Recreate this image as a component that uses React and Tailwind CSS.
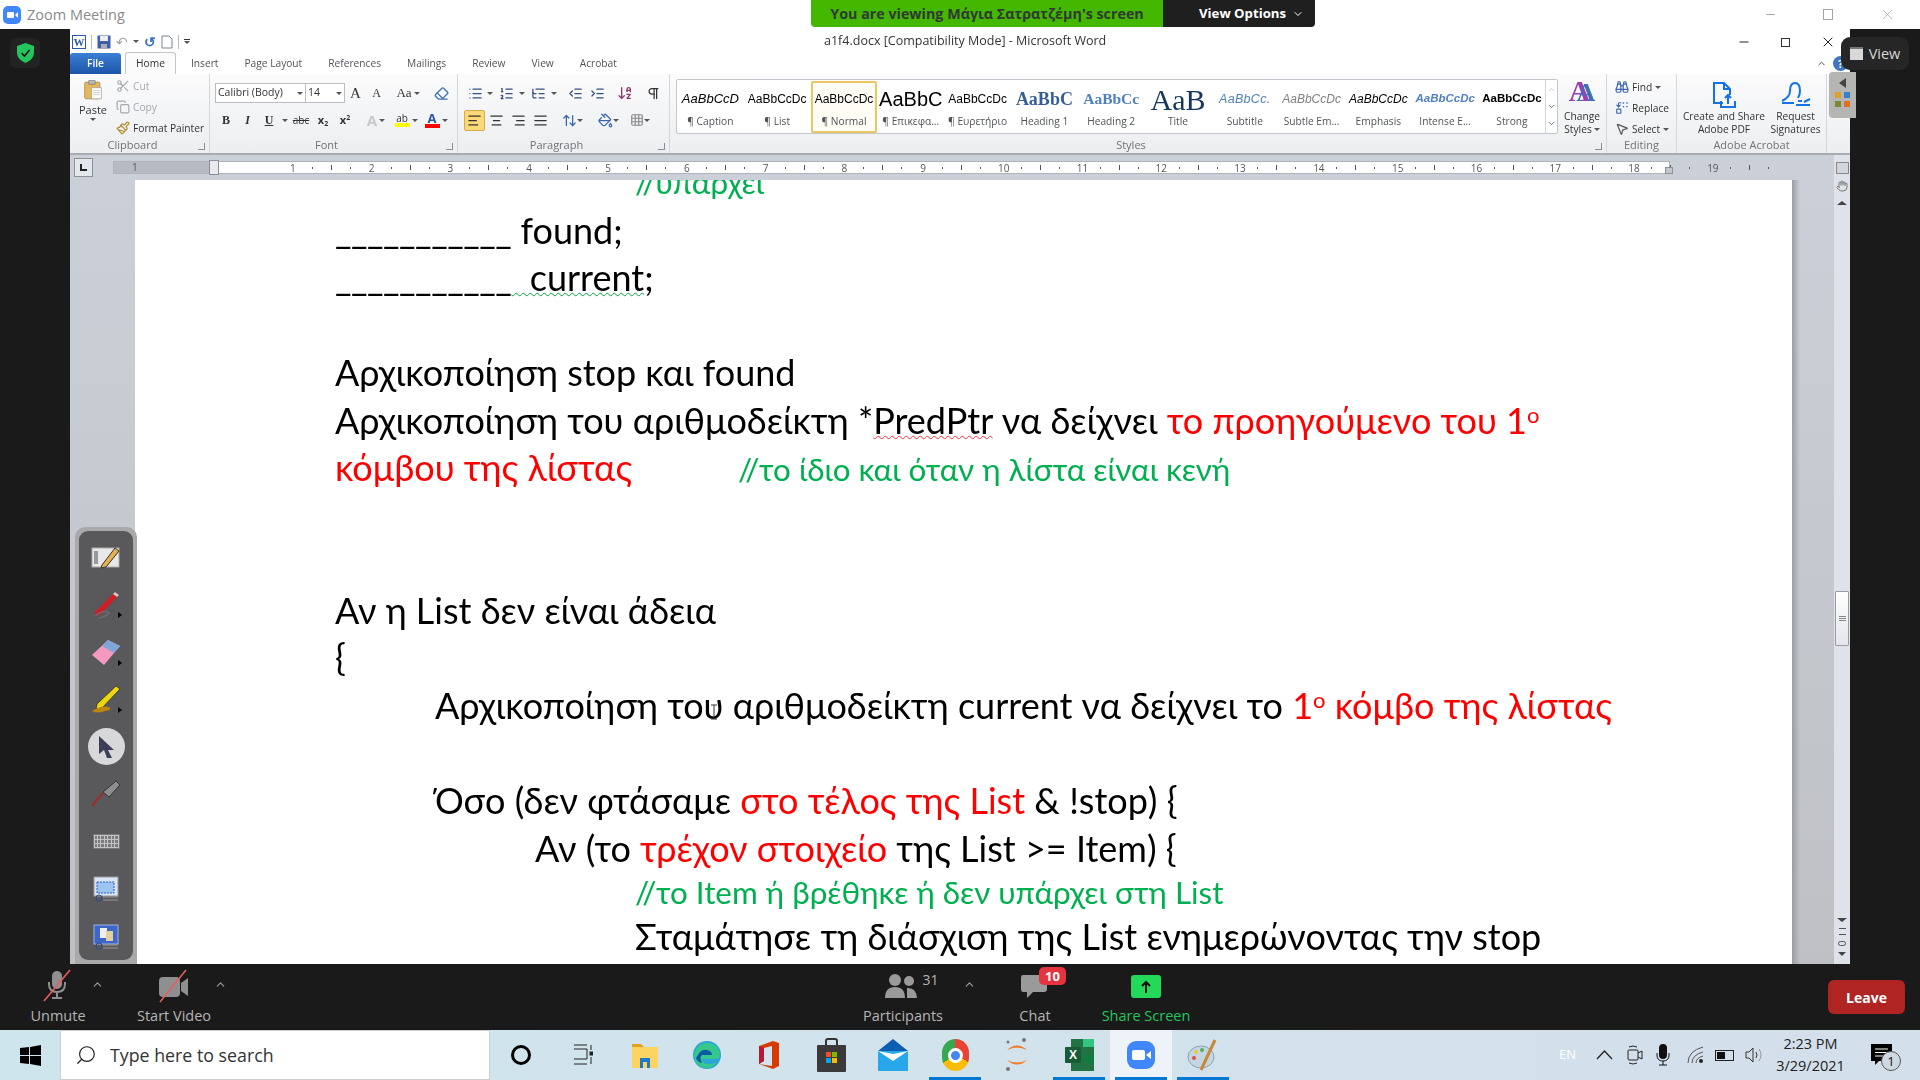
import React from 'react';
import {
  AlignCenter, AlignJustify, AlignLeft, AlignRight, ArrowDownAZ, ChevronDown, ChevronUp, Copy, Eraser,
  Hand, IndentDecrease, IndentIncrease, List, ListOrdered, ListTree, Minus, PaintBucket, Paintbrush, Pilcrow,
  Scissors, Search, Grid3x3, X, ArrowUpDown, MousePointer2, Replace, Binoculars,
} from 'lucide-react';

const styles = [
  { text: 'AaBbCcD', label: '¶ Caption', cls: 'italic text-[13px] text-black' },
  { text: 'AaBbCcDc', label: '¶ List', cls: 'text-[12px] text-black' },
  { text: 'AaBbCcDc', label: '¶ Normal', cls: 'text-[12px] text-black', active: true },
  { text: 'AaBbC', label: '¶ Επικεφα...', cls: 'text-[20px] text-black' },
  { text: 'AaBbCcDc', label: '¶ Ευρετήριο', cls: 'text-[12px] text-black' },
  { text: 'AaBbC', label: 'Heading 1', cls: "font-['Liberation_Serif',serif] font-bold text-[18px] text-[#365f91]" },
  { text: 'AaBbCc', label: 'Heading 2', cls: "font-['Liberation_Serif',serif] font-bold text-[15.5px] text-[#4f81bd]" },
  { text: 'AaB', label: 'Title', cls: "font-['Liberation_Serif',serif] text-[30px] text-[#17365d]" },
  { text: 'AaBbCc.', label: 'Subtitle', cls: 'italic text-[12.5px] tracking-wide text-[#4f81bd]' },
  { text: 'AaBbCcDc', label: 'Subtle Em...', cls: 'italic text-[12px] text-[#808080]' },
  { text: 'AaBbCcDc', label: 'Emphasis', cls: 'italic text-[12px] text-black' },
  { text: 'AaBbCcDc', label: 'Intense E...', cls: 'italic font-semibold text-[11.5px] text-[#4f81bd]' },
  { text: 'AaBbCcDc', label: 'Strong', cls: 'font-bold text-[11.5px] text-black' },
];

const rulerNumbers = [1, 2, 3, 4, 5, 6, 7, 8, 9, 10, 11, 12, 13, 14, 15, 16, 17, 18, 19];

function Caret() {
  return <span className="w-0 h-0 border-x-[3px] border-x-transparent border-t-[3px] border-t-[#555] shrink-0" />;
}

function Group({ width, label, children, launcher = true }) {
  return (
    <div className={`relative flex flex-col h-full border-r border-[#d3d6da] ${width}`}>
      <div className="h-[63px] shrink-0">{children}</div>
      <div className={`flex-1 text-center text-[11px] leading-[15px] text-[#6f7378] ${launcher ? 'pr-[14px]' : ''}`}>{label}</div>
      {launcher && <span className="absolute right-[4px] bottom-[3px] w-[7px] h-[7px] border-r border-b border-[#8a8d92]" />}
    </div>
  );
}

function Slot({ w, children, cls = '' }) {
  return <div className={`flex items-center justify-center shrink-0 ${w} ${cls}`}>{children}</div>;
}

function StyleCell({ item }) {
  return (
    <div className={`w-[66.8px] h-[52px] shrink-0 flex flex-col items-center ${item.active ? 'border-2 border-[#e9c765] rounded-[2px] bg-[#fffdf5]' : 'border-2 border-transparent'}`}>
      <div className={`h-[31px] pt-[2px] flex items-center whitespace-nowrap font-['Liberation_Sans',sans-serif] ${item.cls}`}>{item.text}</div>
      <div className="text-[10.2px] leading-[14px] whitespace-nowrap text-[#50545a]">{item.label}</div>
    </div>
  );
}

function RulerCell({ n }) {
  return (
    <div className="w-[78.8px] shrink-0 flex items-center text-[#555] text-[10px] leading-none">
      <span className="w-[8px] -ml-[4px] text-center">{n}</span>
      <span className="ml-[15px] w-px h-[2px] bg-[#555]" />
      <span className="ml-[18px] w-px h-[5px] bg-[#555]" />
      <span className="ml-[18px] w-px h-[2px] bg-[#555]" />
    </div>
  );
}

function DocLine({ indent = '', green, short, children }) {
  const height = short ? 'h-[41px] leading-[41px]' : 'h-[47.55px] leading-[47.55px]';
  return (
    <div className={`whitespace-nowrap ${height} ${indent} ${green ? 'text-[31.4px] text-[#00b050]' : 'text-[36px] text-black'}`}>
      {children}
    </div>
  );
}

function Red({ children }) {
  return <span className="text-[#ff0000]">{children}</span>;
}

function ControlLabel({ children, cls = 'text-[#b5b5b5]' }) {
  return <div className={`mt-[4px] text-[14.5px] leading-[18px] whitespace-nowrap ${cls}`}>{children}</div>;
}

function TaskIcon({ children, cls = '', active }) {
  return (
    <div className={`relative w-[62px] h-full shrink-0 flex items-center justify-center ${cls}`}>
      {children}
      {active && <span className="absolute bottom-0 left-[5px] right-[5px] h-[3px] bg-[#0078d4]" />}
    </div>
  );
}

function ToolSlot({ children }) {
  return <div className="h-[47.5px] shrink-0 flex items-center justify-center">{children}</div>;
}

function AnnotateTools() {
  return (
    <div className="absolute left-[75px] top-[527px] w-[62px] h-[437px] rounded-t-[10px] bg-[#a9a9ab] p-[4px] z-10">
      <div className="relative h-full rounded-[9px] bg-[#59585b] flex flex-col items-center pt-[2px]">
        <ToolSlot><svg width="30" height="24" viewBox="0 0 30 24"><rect x="1" y="3" width="27" height="19" fill="#e8e8e8" stroke="#aaa" /><rect x="3" y="6" width="4" height="13" fill="#999" /><path d="M11 20 L24 3 L28 6 L15 22 L10 23 Z" fill="#e3b24c" stroke="#333" /></svg></ToolSlot>
        <ToolSlot><svg width="30" height="30" viewBox="0 0 30 30"><path d="M3 24 L24 3 L28 6 L8 27 Z" fill="#cf1f26" /><path d="M24 3 L28 6 L26 8 L22 5 Z" fill="#ccc" /><path d="M4 27 Q14 20 18 24 Q14 28 8 29" stroke="#6d6d70" strokeWidth="1.5" fill="none" /></svg></ToolSlot>
        <ToolSlot><svg width="30" height="28" viewBox="0 0 30 28"><path d="M1 17 L17 2 L29 8 L13 27 Z" fill="#f49ac1" /><path d="M17 2 L29 8 L23 15 L11 8 Z" fill="#7ea6d6" /></svg></ToolSlot>
        <ToolSlot><svg width="30" height="30" viewBox="0 0 30 30"><path d="M6 20 L25 2 L29 5 L11 24 L5 25 Z" fill="#ecd60e" stroke="#222" strokeWidth="0.7" /><path d="M1 27 Q10 21 18 23 Q22 26 14 27 Q6 30 1 27Z" fill="#b9860f" /></svg></ToolSlot>
        <ToolSlot>
          <div className="w-[37px] h-[37px] rounded-full bg-[#d8d7d9] flex items-center justify-center">
            <svg width="20" height="24" viewBox="0 0 20 24"><path d="M3 1 L18 15 L12 15 L16 23 L11 23 L8 15 L3 19 Z" fill="#3d3f58" /></svg>
          </div>
        </ToolSlot>
        <ToolSlot><svg width="30" height="28" viewBox="0 0 30 28"><path d="M12 12 L25 1 L29 5 L18 17 Z" fill="#8d8d8f" stroke="#333" /><path d="M12 13 L1 26" stroke="#a02c2c" strokeWidth="2" /></svg></ToolSlot>
        <ToolSlot>
          <div className="w-[27px] h-[15px] bg-[#c4c4c6] border border-[#777] grid grid-cols-7 gap-px p-px">
            {Array.from({ length: 21 }).map((_, i) => <span key={i} className="bg-[#7b7b7d]" />)}
          </div>
        </ToolSlot>
        <ToolSlot><svg width="26" height="26" viewBox="0 0 26 26"><rect x="1" y="1" width="24" height="19" fill="#d9e4f5" stroke="#999" /><rect x="4" y="6" width="17" height="11" fill="#9cc5f2" stroke="#2d5fd0" strokeDasharray="2 1" /><circle cx="6" cy="22" r="3" fill="none" stroke="#2b4a8f" /><path d="M10 21 H25 M10 24 H25" stroke="#999" /></svg></ToolSlot>
        <ToolSlot><svg width="26" height="26" viewBox="0 0 26 26"><rect x="1" y="1" width="24" height="19" fill="#3f66c6" stroke="#9db3e2" /><rect x="7" y="4" width="7" height="10" fill="#eee" /><rect x="13" y="7" width="7" height="10" fill="#e4cf9f" /><circle cx="6" cy="22" r="3" fill="none" stroke="#2b4a8f" /><path d="M10 21 H25 M10 24 H25" stroke="#999" /></svg></ToolSlot>
        <span className="absolute left-[39px] top-[81px] border-y-[3px] border-y-transparent border-l-[4px] border-l-black" />
        <span className="absolute left-[39px] top-[129px] border-y-[3px] border-y-transparent border-l-[4px] border-l-black" />
        <span className="absolute left-[39px] top-[176px] border-y-[3px] border-y-transparent border-l-[4px] border-l-black" />
      </div>
    </div>
  );
}

function Ribbon() {
  return (
    <div className="h-[81px] shrink-0 flex bg-gradient-to-b from-[#fbfbfc] to-[#eceef0] border-b-2 border-[#a9adb3] text-[#50545a] text-[11px]">
      <Group width="w-[140px]" label="Clipboard">
        <div className="flex h-full">
          <div className="w-[46px] flex flex-col items-center pt-[6px]">
            <svg width="26" height="28" viewBox="0 0 26 28"><rect x="1" y="3" width="22" height="24" rx="2" fill="#e4b85e" stroke="#a8843b" /><rect x="7" y="1" width="9" height="5" fill="#bbb" stroke="#777" /><path d="M11 11 H25 V27 H11 Z" fill="#fff" stroke="#999" /><path d="M13 15 H23 M13 18 H23 M13 21 H23" stroke="#bbb" /></svg>
            <span className="leading-[14px] mt-[3px] text-[#333]">Paste</span>
            <span className="mt-[4px]"><Caret /></span>
          </div>
          <div className="flex flex-col gap-[5px] pt-[4px] text-[10.2px] leading-[16px]">
            <div className="flex items-center gap-[3px] text-[#a5a8ac]"><Scissors size={14} className="text-[#a5a8ac]" />Cut</div>
            <div className="flex items-center gap-[3px] text-[#a5a8ac]"><Copy size={14} />Copy</div>
            <div className="flex items-center gap-[3px] text-[#333] whitespace-nowrap"><Paintbrush size={14} className="text-[#b58a2e]" />Format Painter</div>
          </div>
        </div>
      </Group>

      <Group width="w-[248px]" label="Font">
        <div className="flex items-center h-[22px] mt-[8px] pl-[5px]">
          <div className="w-[91px] h-[20px] border border-[#b9bcc1] bg-white flex items-center justify-between px-[2px] text-[10.5px] text-[#333] whitespace-nowrap">Calibri (Body)<Caret /></div>
          <div className="w-[39px] h-[20px] border border-l-0 border-[#b9bcc1] bg-white flex items-center justify-between px-[2px] text-[10.5px] text-[#333]">14<Caret /></div>
          <Slot w="w-[21px]"><span className="text-[15px] font-['Liberation_Serif',serif] text-[#333]">A</span></Slot>
          <Slot w="w-[21px]"><span className="text-[12px] font-['Liberation_Serif',serif] text-[#333]">A</span></Slot>
          <Slot w="w-[30px] ml-[6px]"><span className="text-[13px] font-['Liberation_Serif',serif] text-[#333] mr-[2px]">Aa</span><Caret /></Slot>
          <Slot w="w-[24px] ml-[6px]"><Eraser size={15} className="text-[#3f6fb5]" /></Slot>
        </div>
        <div className="flex items-center h-[22px] mt-[5px] pl-[5px] text-[#333]">
          <Slot w="w-[22px]"><span className="font-bold text-[12px] font-['Liberation_Serif',serif]">B</span></Slot>
          <Slot w="w-[21px]"><span className="italic font-bold text-[12px] font-['Liberation_Serif',serif]">I</span></Slot>
          <Slot w="w-[22px]"><span className="underline font-bold text-[12px] font-['Liberation_Serif',serif]">U</span></Slot>
          <Slot w="w-[10px]"><Caret /></Slot>
          <Slot w="w-[22px]"><span className="line-through text-[10px]">abc</span></Slot>
          <Slot w="w-[22px]"><span className="font-bold text-[11px]">x<sub className="text-[7px]">2</sub></span></Slot>
          <Slot w="w-[22px]"><span className="font-bold text-[11px]">x<sup className="text-[7px]">2</sup></span></Slot>
          <Slot w="w-[28px] ml-[6px]"><span className="text-[#c9c9cc] text-[15px] font-bold mr-[2px]">A</span><Caret /></Slot>
          <Slot w="w-[32px]"><span className="flex flex-col items-center mr-[2px]"><span className="text-[10px] leading-[10px] underline">ab</span><span className="w-[15px] h-[4px] bg-[#ffff00]" /></span><Caret /></Slot>
          <Slot w="w-[28px]"><span className="flex flex-col items-center mr-[2px]"><span className="text-[13px] leading-[12px] font-bold text-[#2a55a8]">A</span><span className="w-[15px] h-[4px] bg-[#ff0000]" /></span><Caret /></Slot>
        </div>
      </Group>

      <Group width="w-[212px]" label="Paragraph">
        <div className="flex items-center h-[22px] mt-[8px] pl-[7px] text-[#39507d]">
          <Slot w="w-[20px]"><List size={15} /></Slot><Slot w="w-[10px]"><Caret /></Slot>
          <Slot w="w-[22px]"><ListOrdered size={15} /></Slot><Slot w="w-[10px]"><Caret /></Slot>
          <Slot w="w-[22px]"><ListTree size={15} /></Slot><Slot w="w-[10px]"><Caret /></Slot>
          <Slot w="w-[22px] ml-[5px]"><IndentDecrease size={15} /></Slot>
          <Slot w="w-[22px]"><IndentIncrease size={15} /></Slot>
          <Slot w="w-[28px] ml-[3px]"><ArrowDownAZ size={16} className="text-[#8b3a6b]" /></Slot>
          <Slot w="w-[28px]"><Pilcrow size={15} className="text-[#333]" /></Slot>
        </div>
        <div className="flex items-center h-[22px] mt-[5px] pl-[6px] text-[#333]">
          <Slot w="w-[21px] h-[21px]" cls="bg-[#fbd977] border border-[#d5aa4c] rounded-[2px]"><AlignLeft size={15} /></Slot>
          <Slot w="w-[22px]"><AlignCenter size={15} /></Slot>
          <Slot w="w-[22px]"><AlignRight size={15} /></Slot>
          <Slot w="w-[22px]"><AlignJustify size={15} /></Slot>
          <Slot w="w-[30px] ml-[6px]"><ArrowUpDown size={15} className="text-[#3a65b0]" /><Caret /></Slot>
          <Slot w="w-[30px] ml-[6px]"><PaintBucket size={15} className="text-[#3a65b0]" /><Caret /></Slot>
          <Slot w="w-[30px] ml-[2px]"><Grid3x3 size={14} className="text-[#888]" /><Caret /></Slot>
        </div>
      </Group>

      <Group width="w-[937px]" label="Styles">
        <div className="flex pt-[5px] pl-[6px] h-full">
          <div className="flex h-[55px] w-[883px] bg-white border border-[#c3c6ca] rounded-[2px] items-center">
            {styles.map((s) => <StyleCell key={s.label} item={s} />)}
            <div className="flex-1 h-full border-l border-[#d4d6da] flex flex-col items-center justify-between py-[5px]">
              <ChevronUp size={9} className="text-[#bbb]" />
              <ChevronDown size={9} className="text-[#444]" />
              <ChevronDown size={9} className="text-[#444]" />
            </div>
          </div>
          <div className="w-[48px] flex flex-col items-center text-center text-[10.2px] leading-[13px] text-[#333]">
            <div className="h-[30px] flex items-end -mt-[3px]">
              <span className="text-[30px] leading-[30px] font-bold text-[#9c3fb5] font-['Liberation_Serif',serif]">A</span>
              <span className="-ml-[14px] text-[26px] leading-[26px] font-bold text-[#3f6fb5] font-['Liberation_Serif',serif]">A</span>
            </div>
            <span className="mt-[4px]">Change</span>
            <span className="flex items-center gap-[2px]">Styles<Caret /></span>
          </div>
        </div>
      </Group>

      <Group width="w-[70px]" label="Editing" launcher={false}>
        <div className="flex flex-col gap-[5px] pt-[5px] pl-[8px] text-[10.2px] leading-[16px] text-[#333] whitespace-nowrap">
          <div className="flex items-center gap-[3px]"><Binoculars size={14} className="text-[#3a65b0]" />Find<Caret /></div>
          <div className="flex items-center gap-[3px]"><Replace size={14} className="text-[#3a65b0]" />Replace</div>
          <div className="flex items-center gap-[3px]"><MousePointer2 size={14} className="text-[#555]" />Select<Caret /></div>
        </div>
      </Group>

      <Group width="w-[150px]" label="Adobe Acrobat" launcher={false}>
        <div className="flex pl-[3px] text-center text-[10.2px] leading-[13px] text-[#333]">
          <div className="w-[88px] flex flex-col items-center pt-[7px]">
            <svg width="26" height="28" viewBox="0 0 26 28" fill="none" stroke="#1473e6" strokeWidth="2"><path d="M12 22 H3 V2 H13 L19 8 V14" /><path d="M13 2 V8 H19" /><path d="M10 20 V26 H24 V20 M17 23 V14 M14 17 L17 14 L20 17" /></svg>
            <span className="mt-[1px] whitespace-nowrap">Create and Share</span>
            <span>Adobe PDF</span>
          </div>
          <div className="w-[55px] flex flex-col items-center pt-[7px]">
            <svg width="32" height="28" viewBox="0 0 32 28" fill="none" stroke="#1473e6" strokeWidth="2"><path d="M2 20 Q10 16 10 10 Q10 2 15 2 Q20 2 20 10 Q20 14 18 17 M2 22 H14" /><path d="M16 24 H30 M18 20 L22 20 M24 21 L30 18" /></svg>
            <span className="mt-[1px]">Request</span>
            <span>Signatures</span>
          </div>
        </div>
      </Group>

      <div className="flex-1 relative">
        <div className="absolute left-[2px] -top-[2px] w-[27px] h-[46px] bg-[#b5b5b3] rounded-l-[4px] flex flex-col items-center pt-[6px] gap-[4px]">
          <span className="border-y-[5px] border-y-transparent border-r-[7px] border-r-[#444]" />
          <div className="grid grid-cols-2 gap-[3px]">
            <span className="w-[6px] h-[6px] bg-[#e0a030]" /><span className="w-[6px] h-[6px] bg-[#3a80c8]" />
            <span className="w-[6px] h-[6px] bg-[#7a8a30]" /><span className="w-[6px] h-[6px] bg-[#e07020]" />
          </div>
        </div>
      </div>
    </div>
  );
}

function WordWindow() {
  return (
    <div className="w-[1780px] h-full shrink-0 flex flex-col bg-white blur-[0.3px]">
      <div className="h-[23px] shrink-0 flex items-center relative">
        <div className="flex items-center gap-[5px] pl-[2px] pt-[2px]">
          <span className="w-[14px] h-[14px] border border-[#2a5caa] bg-white text-[#2a5caa] font-bold text-[11px] leading-[12px] text-center font-['Liberation_Serif',serif]">W</span>
          <span className="w-px h-[14px] bg-[#bbb]" />
          <svg width="14" height="14" viewBox="0 0 14 14"><rect x="0.5" y="0.5" width="13" height="13" fill="#3d5fa8" /><rect x="3" y="1" width="8" height="5" fill="#eee" /><rect x="4" y="9" width="6" height="5" fill="#aab" /></svg>
          <span className="text-[#9ca3ad] text-[14px] leading-none">↶</span>
          <Caret />
          <span className="text-[#3a74c4] font-bold text-[14px] leading-none">↺</span>
          <svg width="12" height="14" viewBox="0 0 12 14"><path d="M1 1 H8 L11 4 V13 H1 Z" fill="#fff" stroke="#7a8391" /></svg>
          <span className="w-px h-[14px] bg-[#bbb]" />
          <span className="flex flex-col items-center gap-px"><span className="w-[6px] h-px bg-[#333]" /><Caret /></span>
        </div>
        <div className="absolute left-[754px] top-[4px] text-[12.5px] leading-[16px] text-[#333] whitespace-nowrap">a1f4.docx [Compatibility Mode]  -  Microsoft Word</div>
        <div className="ml-auto flex items-center gap-[30px] pr-[14px] pt-[3px] text-[#222]">
          <Minus size={14} />
          <span className="w-[9px] h-[9px] border border-[#333] bg-white" />
          <X size={16} strokeWidth={1.5} />
        </div>
      </div>

      <div className="h-[22px] shrink-0 flex items-end text-[10.2px] text-[#50545a] relative">
        <div className="w-[51px] h-[21px] bg-gradient-to-b from-[#3b7fd6] to-[#1d56a8] text-white font-semibold flex items-center justify-center rounded-t-[3px]">File</div>
        <div className="ml-[4px] w-[51px] h-[22px] bg-[#fbfbfc] border border-b-0 border-[#c3c6ca] text-[#333] flex items-center justify-center rounded-t-[3px]">Home</div>
        <div className="h-[21px] flex items-center pl-[15px] gap-[26px] whitespace-nowrap">
          <span>Insert</span><span>Page Layout</span><span>References</span><span>Mailings</span><span>Review</span><span>View</span><span>Acrobat</span>
        </div>
        <div className="ml-auto flex items-center gap-[6px] pr-[2px] h-[21px]">
          <ChevronUp size={11} className="text-[#444]" />
          <span className="w-[15px] h-[15px] rounded-full bg-[#3f74c0] text-white text-[11px] font-bold leading-[15px] text-center">?</span>
        </div>
      </div>

      <Ribbon />

      <div className="h-[25px] shrink-0 flex items-center bg-[#cbd0d8]">
        <div className="ml-[4px] w-[19px] h-[19px] bg-[#e4e7eb] border border-[#8d9197] flex items-center justify-center">
          <span className="w-[7px] h-[7px] border-l-2 border-b-2 border-[#222]" />
        </div>
        <div className="ml-[20px] flex items-center h-[13px] w-[1557px] bg-white border border-[#b0b4ba] relative">
          <div className="w-[100px] h-full shrink-0 bg-[#b6bbc3] flex items-center text-[10px] text-[#555] pl-[18px]">1</div>
          <div className="flex pl-[78.8px]">
            {rulerNumbers.map((n) => <RulerCell key={n} n={n} />)}
          </div>
          <span className="absolute left-[95px] -top-[2px] w-[10px] h-[15px] bg-[#e8eaee] border border-[#8d9197]" />
          <span className="absolute right-[-4px] top-[5px] w-[8px] h-[7px] bg-[#c4c8ce] border border-[#8d9197]" />
        </div>
        <div className="ml-auto w-[16px] h-full bg-[#dfe2e8] flex items-center justify-center">
          <span className="w-[13px] h-[12px] border border-[#888] bg-[#d2d5da]" />
        </div>
      </div>

      <div className="flex-1 min-h-0 flex bg-gradient-to-b from-[#cbd0d8] to-[#bec0c4] overflow-hidden">
        <div className="w-[65px] shrink-0" />
        <div className="w-[1657px] shrink-0 h-full bg-white overflow-hidden relative font-['Lato','Noto_Sans',sans-serif]">
          <div className="-mt-[21px]">
            <DocLine indent="pl-[500px]" green>//υπάρχει</DocLine>
            <DocLine indent="pl-[200px]"><span className="tracking-[-0.5px]">___________</span> found;</DocLine>
            <DocLine indent="pl-[200px]"><span className="tracking-[-0.5px]">___________</span><span className="underline decoration-wavy decoration-green-600 decoration-1">&nbsp;&nbsp;current</span>;</DocLine>
            <DocLine />
            <DocLine indent="pl-[200px]">Αρχικοποίηση stop και found</DocLine>
            <DocLine indent="pl-[200px]">Αρχικοποίηση του αριθμοδείκτη *<span className="underline decoration-wavy decoration-red-500 decoration-1">PredPtr</span> να δείχνει <Red>το προηγούμενο του 1<sup className="text-[22px]">ο</sup></Red></DocLine>
            <DocLine indent="pl-[200px]"><Red>κόμβου της λίστας</Red><span className="ml-[106px] text-[31.4px] text-[#00b050]">//το ίδιο και όταν η λίστα είναι κενή</span></DocLine>
            <DocLine />
            <DocLine />
            <DocLine indent="pl-[200px]">Αν η List δεν είναι άδεια</DocLine>
            <DocLine indent="pl-[200px]">{'{'}</DocLine>
            <DocLine indent="pl-[300px]">Αρχικοποίηση του αριθμοδείκτη current να δείχνει το <Red>1<sup className="text-[22px]">ο</sup> κόμβο της λίστας</Red></DocLine>
            <DocLine />
            <DocLine indent="pl-[300px]">Όσο (δεν φτάσαμε <Red>στο τέλος της List</Red> &amp; !stop) {'{'}</DocLine>
            <DocLine indent="pl-[400px]">Αν (το <Red>τρέχον στοιχείο</Red> της List &gt;= Item) {'{'}</DocLine>
            <DocLine indent="pl-[500px]" green short>//το Item ή βρέθηκε ή δεν υπάρχει στη List</DocLine>
            <DocLine indent="pl-[500px]">Σταμάτησε τη διάσχιση της List ενημερώνοντας την stop</DocLine>
          </div>
          <svg width="8" height="16" viewBox="0 0 8 16" className="absolute left-[575px] top-[524px]"><path d="M1 1 H7 M4 1 V15 M1 15 H7" stroke="#333" fill="none" /></svg>
        </div>
        <div className="w-[8px] shrink-0 bg-gradient-to-r from-[#9a9da2] to-transparent" />
        <div className="flex-1" />
        <div className="w-[16px] shrink-0 bg-[#dfe2e8] flex flex-col items-center relative">
          <Hand size={12} className="text-[#777]" />
          <span className="mt-[9px] border-x-[5px] border-x-transparent border-b-[4px] border-b-[#444]" />
          <div className="mt-[386px] w-[14px] h-[55px] bg-gradient-to-b from-white to-[#e4e6ea] border border-[#9a9da3] rounded-[1px] flex flex-col items-center justify-center gap-[1px]">
            <span className="w-[7px] h-px bg-[#888]" /><span className="w-[7px] h-px bg-[#888]" /><span className="w-[7px] h-px bg-[#888]" />
          </div>
          <span className="mt-[272px] border-x-[5px] border-x-transparent border-t-[4px] border-t-[#444]" />
          <span className="mt-[6px] w-[7px] h-[7px] border-t border-b border-[#555]" />
          <span className="mt-[6px] w-[8px] h-[5px] rounded-full border border-[#555]" />
          <span className="mt-[6px] border-x-[4px] border-x-transparent border-t-[4px] border-t-[#444]" />
        </div>
      </div>
    </div>
  );
}

function ControlBar() {
  return (
    <div className="h-[66px] shrink-0 bg-[#1a1a1a] flex relative">
      <div className="w-[116px] shrink-0 flex flex-col items-center pt-[5px] relative">
        <svg width="30" height="34" viewBox="0 0 30 34" className="-ml-[2px]"><rect x="10" y="2" width="10" height="18" rx="5" fill="#8f8f8f" /><path d="M7 13 V15 Q7 23 15 23 Q23 23 23 15 V13 M15 23 V29 M10 29 H20" stroke="#8f8f8f" strokeWidth="2" fill="none" /><path d="M2 32 L28 1" stroke="#e85d5d" strokeWidth="1.6" /></svg>
        <ControlLabel>Unmute</ControlLabel>
        <ChevronUp size={13} className="absolute left-[91px] top-[14px] text-[#a0a0a0]" />
      </div>
      <div className="w-[116px] shrink-0 flex flex-col items-center pt-[5px] relative">
        <svg width="34" height="34" viewBox="0 0 34 34"><rect x="2" y="8" width="21" height="20" rx="4" fill="#8f8f8f" /><path d="M24 14 L31 9 V27 L24 22 Z" fill="#8f8f8f" /><path d="M3 33 L29 1" stroke="#e85d5d" strokeWidth="1.6" /></svg>
        <ControlLabel>Start Video</ControlLabel>
        <ChevronUp size={13} className="absolute left-[98px] top-[14px] text-[#a0a0a0]" />
      </div>
      <div className="w-[616px] shrink-0" />
      <div className="w-[110px] shrink-0 flex flex-col items-center pt-[5px] relative">
        <div className="flex items-start h-[34px] ml-[18px]">
          <svg width="32" height="26" viewBox="0 0 32 26" className="mt-[4px]"><circle cx="10" cy="7" r="6" fill="#9a9a9a" /><path d="M0 25 Q0 14 10 14 Q20 14 20 25 Z" fill="#9a9a9a" /><circle cx="24" cy="8" r="5" fill="#9a9a9a" /><path d="M22 15 Q31 14 32 25 H22 Z" fill="#9a9a9a" /></svg>
          <span className="text-[14px] text-[#b5b5b5] ml-[5px] leading-[22px]">31</span>
        </div>
        <ControlLabel>Participants</ControlLabel>
        <ChevronUp size={13} className="absolute left-[115px] top-[14px] text-[#a0a0a0]" />
      </div>
      <div className="w-[78px] ml-[38px] shrink-0 flex flex-col items-center pt-[5px] relative">
        <svg width="28" height="34" viewBox="0 0 28 34" className="-ml-[2px]"><path d="M3 6 H25 Q27 6 27 9 V20 Q27 23 24 23 H13 L7 29 V23 H3 Q1 23 1 20 V9 Q1 6 3 6 Z" fill="#9a9a9a" /></svg>
        <ControlLabel>Chat</ControlLabel>
        <span className="absolute left-[43px] top-[3px] w-[27px] h-[18px] rounded-[5px] bg-[#e5343f] text-white text-[13px] font-bold leading-[18px] text-center">10</span>
      </div>
      <div className="w-[110px] ml-[17px] shrink-0 flex flex-col items-center pt-[5px]">
        <div className="h-[34px] flex items-start">
          <div className="mt-[6px] w-[30px] h-[23px] rounded-[3px] bg-[#22d95a] flex items-center justify-center">
            <svg width="12" height="14" viewBox="0 0 12 14"><path d="M6 13 V2 M2 6 L6 2 L10 6" stroke="#111" strokeWidth="2" fill="none" /></svg>
          </div>
        </div>
        <ControlLabel cls="text-[#22c55e]">Share Screen</ControlLabel>
      </div>
      <button className="ml-auto mr-[15px] mt-[16px] w-[77px] h-[34px] rounded-[6px] bg-[#b02424] text-white text-[14px] font-bold">Leave</button>
    </div>
  );
}

function Taskbar() {
  return (
    <div className="h-[50px] shrink-0 flex bg-gradient-to-r from-[#cee5ed] via-[#d2e3ec] to-[#d3dfeb]">
      <div className="w-[60px] shrink-0 flex items-center justify-center">
        <svg width="21" height="21" viewBox="0 0 21 21"><path d="M0 3 L9 2 V10 H0 Z M10 2 L21 0 V10 H10 Z M0 11 H9 V19 L0 18 Z M10 11 H21 V21 L10 19 Z" fill="#000" /></svg>
      </div>
      <div className="w-[430px] shrink-0 bg-white border border-[#c9ced2] flex items-center pl-[14px] gap-[13px] text-[#333] text-[17.8px]">
        <Search size={22} strokeWidth={1.3} className="text-[#222] -scale-x-100" />
        <span>Type here to search</span>
      </div>
      <TaskIcon><span className="w-[20px] h-[20px] rounded-full border-[3px] border-black" /></TaskIcon>
      <TaskIcon>
        <svg width="22" height="22" viewBox="0 0 22 22" fill="none" stroke="#222"><path d="M2 1 H15 M2 5 H15 V15 H2 M2 20 H15 M19 1 V6 M19 13 V20" /><rect x="18" y="8" width="2.5" height="3" fill="#222" /></svg>
      </TaskIcon>
      <TaskIcon>
        <svg width="28" height="26" viewBox="0 0 28 26"><path d="M1 2 H10 L13 5 H1 Z" fill="#e0a11b" /><rect x="1" y="5" width="26" height="21" fill="#fcd462" /><path d="M9 26 V16 H19 V26 H16 V20 H12 V26 Z" fill="#1f78c8" /></svg>
      </TaskIcon>
      <TaskIcon>
        <svg width="30" height="30" viewBox="0 0 30 30"><circle cx="15" cy="15" r="14" fill="#2aa5d8" /><path d="M2 16 Q3 4 15 3 Q27 3 28 15 Q28 19 23 19 H10 Q10 24 17 24 Q22 24 25 22 Q20 29 13 28 Q3 26 2 16Z" fill="#35c78c" /><path d="M4 18 Q9 8 15 10 Q20 11 20 15 H10 Q7 17 10 23 Q5 22 4 18Z" fill="#0c59a4" /></svg>
      </TaskIcon>
      <TaskIcon>
        <svg width="24" height="30" viewBox="0 0 24 30"><path d="M2 6 L16 1 L22 3 V26 L16 29 L2 24 L15 26 V6 L7 8 V21 L2 24 Z" fill="#d83b01" /><path d="M2 6 L7 8 V21 L2 24 Z" fill="#b11c36" /></svg>
      </TaskIcon>
      <TaskIcon>
        <svg width="29" height="34" viewBox="0 0 29 34"><path d="M9 8 V3 Q9 1 11 1 H18 Q20 1 20 3 V8" stroke="#333" strokeWidth="2" fill="none" /><rect x="0" y="7" width="29" height="27" rx="1" fill="#3a3a3a" /><rect x="9" y="14" width="5" height="5" fill="#f25022" /><rect x="15" y="14" width="5" height="5" fill="#7fba00" /><rect x="9" y="20" width="5" height="5" fill="#00a4ef" /><rect x="15" y="20" width="5" height="5" fill="#ffb900" /></svg>
      </TaskIcon>
      <TaskIcon>
        <svg width="30" height="32" viewBox="0 0 30 32"><path d="M0 12 L15 0 L30 12 Z" fill="#0b5fb0" /><rect x="0" y="12" width="30" height="20" fill="#28a8ea" /><path d="M0 12 L15 22 L30 12 L15 15 Z" fill="#fff" /></svg>
      </TaskIcon>
      <TaskIcon active>
        <div className="w-[27px] h-[32px] rounded-full flex items-center justify-center relative overflow-hidden bg-[conic-gradient(#ea4335_0_33%,#fbbc05_33%_66%,#34a853_66%_100%)]">
          <span className="w-[15px] h-[15px] rounded-full bg-[#4285f4] border-[3px] border-white" />
        </div>
      </TaskIcon>
      <TaskIcon>
        <svg width="24" height="36" viewBox="0 0 24 36"><path d="M2 13 Q12 4 22 13 Q12 8 2 13Z M2 23 Q12 32 22 23 Q12 28 2 23Z" fill="#f37726" /><circle cx="19" cy="3" r="2" fill="#777" /><circle cx="3" cy="5" r="1.5" fill="#777" /><circle cx="3" cy="32" r="2" fill="#777" /></svg>
      </TaskIcon>
      <TaskIcon active>
        <svg width="29" height="34" viewBox="0 0 29 34"><rect x="6" y="1" width="23" height="32" fill="#217346" /><rect x="18" y="1" width="11" height="8" fill="#33c481" /><rect x="18" y="17" width="11" height="8" fill="#107c41" /><rect x="0" y="9" width="16" height="16" rx="1" fill="#185c37" /><text x="8" y="21" textAnchor="middle" fontSize="12" fontWeight="700" fill="#fff" fontFamily="Liberation Sans">X</text></svg>
      </TaskIcon>
      <TaskIcon active cls="bg-[#edf3f8]">
        <div className="w-[28px] h-[28px] rounded-[9px] bg-[#4087fc] flex items-center justify-center gap-[1px]">
          <span className="w-[13px] h-[10px] rounded-[2px] bg-white" />
          <span className="border-y-[4px] border-y-transparent border-r-[5px] border-r-white" />
        </div>
      </TaskIcon>
      <TaskIcon active>
        <svg width="32" height="34" viewBox="0 0 32 34"><ellipse cx="14" cy="19" rx="13" ry="11" fill="#c3d6e2" stroke="#8aa3b5" /><circle cx="7" cy="20" r="2" fill="#e0503c" /><circle cx="9" cy="14" r="2" fill="#e8c73a" /><circle cx="15" cy="12" r="2" fill="#4fae55" /><path d="M14 32 L28 2" stroke="#c9873a" strokeWidth="3" /></svg>
      </TaskIcon>

      <div className="ml-auto flex items-center h-full text-[#222]">
        <span className="text-[13px] text-white mr-[20px]">EN</span>
        <svg width="17" height="10" viewBox="0 0 17 10" className="mr-[14px]"><path d="M1 9 L8.5 1 L16 9" stroke="#222" fill="none" strokeWidth="1.3" /></svg>
        <svg width="16" height="22" viewBox="0 0 16 22" className="mr-[13px]" fill="none" stroke="#222"><rect x="1" y="6" width="10" height="10" rx="1" /><path d="M11 9 L15 7 V15 L11 13 M2 3 Q6 1 10 3 M2 19 Q6 21 10 19" /></svg>
        <svg width="14" height="24" viewBox="0 0 14 24" className="mr-[17px]"><rect x="3" y="1" width="8" height="15" rx="4" fill="#111" /><path d="M1 10 V12 Q1 18 7 18 Q13 18 13 12 V10 M7 18 V22 M3 22 H11" stroke="#111" fill="none" /></svg>
        <svg width="17" height="18" viewBox="0 0 17 18" className="mr-[11px]" fill="none" stroke="#555"><path d="M1 17 Q1 5 16 1 M5 17 Q5 9 16 6 M9 17 Q9 12 16 10" /><circle cx="14" cy="15" r="2" fill="#222" stroke="none" /></svg>
        <span className="w-[19px] h-[11px] border border-[#222] flex items-center pl-[1px] mr-[11px]"><span className="w-[8px] h-[7px] bg-[#111]" /></span>
        <svg width="20" height="18" viewBox="0 0 20 18" className="mr-[8px]" fill="none" stroke="#333"><path d="M1 6 H4 L8 2 V16 L4 12 H1 Z" /><path d="M11 6 Q13 9 11 12" /><path d="M14 3 Q18 9 14 15" stroke="#999" /></svg>
        <div className="w-[75px] text-center text-[14.5px] leading-[22px] text-[#222]">
          <div>2:23 PM</div>
          <div>3/29/2021</div>
        </div>
        <div className="relative w-[72px] flex justify-center">
          <svg width="21" height="22" viewBox="0 0 21 22" className="-ml-[6px]"><path d="M0 0 H21 V17 H8 L4 21 V17 H0 Z" fill="#000" /><path d="M4 5 H17 M4 8.5 H17 M4 12 H14" stroke="#fff" /></svg>
          <span className="absolute left-[33px] top-[7px] w-[20px] h-[20px] rounded-full bg-[#cdd8e2] border border-[#555] text-[13px] leading-[18px] text-center text-[#111]">1</span>
        </div>
      </div>
    </div>
  );
}

export default function App() {
  return (
    <div className="relative w-[1920px] h-[1080px] flex flex-col overflow-hidden font-['Open_Sans','Noto_Sans',sans-serif]">
      {/* zoom title bar */}
      <div className="h-[29px] shrink-0 bg-white flex items-center">
        <div className="ml-[3px] w-[18px] h-[18px] rounded-[5px] bg-[#4087fc] flex items-center justify-center gap-px">
          <span className="w-[7px] h-[6px] rounded-[1px] bg-white" />
          <span className="border-y-[3px] border-y-transparent border-r-[3px] border-r-white" />
        </div>
        <span className="ml-[6px] text-[14.5px] text-[#8a8a8a]">Zoom Meeting</span>
        <div className="ml-auto flex items-center gap-[46px] pr-[24px] text-[#a5a5a5]">
          <Minus size={13} />
          <span className="w-[10px] h-[11px] border border-[#a5a5a5]" />
          <X size={17} strokeWidth={1} />
        </div>
      </div>

      <div className="h-[935px] shrink-0 flex bg-[#1a1a1a]">
        <div className="w-[70px] shrink-0 pt-[9px] pl-[10px]">
          <div className="w-[30px] h-[30px] rounded-[6px] bg-[#232323] flex items-center justify-center">
            <svg width="17" height="20" viewBox="0 0 17 20"><path d="M8.5 0 L17 3 V10 Q17 16 8.5 20 Q0 16 0 10 V3 Z" fill="#22c55e" /><path d="M4.5 10 L7.5 13 L12.5 7" stroke="#111" strokeWidth="1.6" fill="none" /></svg>
          </div>
        </div>
        <WordWindow />
        <div className="flex-1" />
      </div>

      <ControlBar />
      <Taskbar />

      <AnnotateTools />

      {/* share banner */}
      <div className="absolute left-[811px] top-0 w-[504px] h-[27px] flex rounded-b-[4px] overflow-hidden font-bold text-[14.3px] leading-[27px] z-20">
        <div className="w-[352px] bg-[#44b700] text-center text-[#2f3a35]">You are viewing Μάγια Σατρατζέμη's screen</div>
        <div className="flex-1 bg-[#1f1f1f] text-white flex items-center pl-[36px] gap-[6px] text-[13.2px]">View Options<ChevronDown size={12} /></div>
      </div>

      {/* view pill */}
      <div className="absolute left-[1841px] top-[37px] w-[68px] h-[33px] rounded-[9px] bg-[#262626] flex items-center justify-center gap-[6px] text-[#d8d8d8] text-[14.5px] z-20">
        <span className="w-[13px] h-[13px] bg-[#d8d8d8] border-t-2 border-[#777]" />View
      </div>
    </div>
  );
}
